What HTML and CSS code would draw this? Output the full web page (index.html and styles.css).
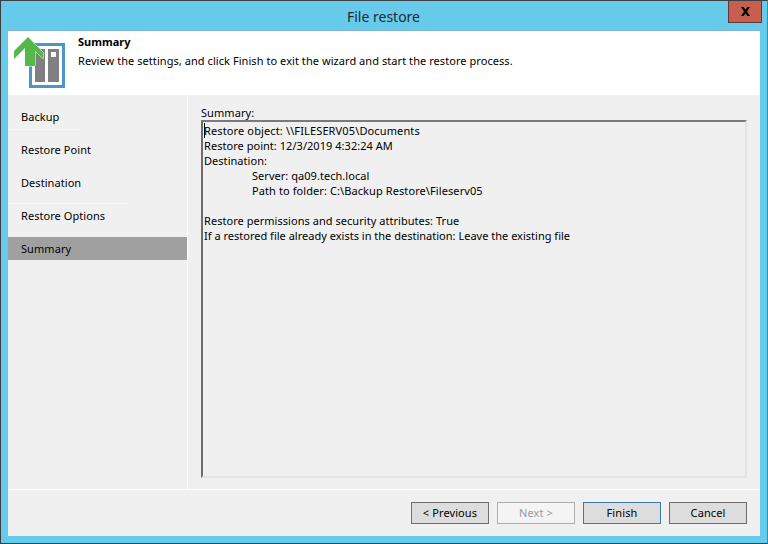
FILE: index.html
```html
<!DOCTYPE html>
<html lang="en">
<head>
<meta charset="utf-8">
<title>File restore</title>
<link rel="stylesheet" href="styles.css">
</head>
<body>
<div class="window">
  <div class="titlebar">
    <span class="title">File restore</span>
    <button class="close" aria-label="Close">
      <svg width="11" height="9" viewBox="0 0 11 9"><path d="M1 0h2.500l2 2.500 2-2.500h2.500L7 4.500 10 9H7.500l-2-2.500-2 2.500H1l3-4.500z" fill="#000"/></svg>
    </button>
  </div>
  <div class="client">
    <header class="head">
      <svg class="logo" width="70" height="64" viewBox="0 0 70 64">
        <rect x="22.500" y="13.500" width="33" height="42" fill="#fff" stroke="#4a97c7" stroke-width="3"/>
        <rect x="27" y="18" width="10" height="33" fill="#808080"/>
        <rect x="40" y="18" width="11" height="33" fill="#808080"/>
        <rect x="43" y="21" width="5" height="5" fill="#fff"/>
        <path d="M20 6 35 21V28L27 20V35H17V17L6 28V20z" fill="#54b948" stroke="#fff" stroke-width="1" paint-order="stroke"/>
      </svg>
      <div class="head-text">
        <div class="head-title">Summary</div>
        <div class="head-desc">Review the settings, and click Finish to exit the wizard and start the restore process.</div>
      </div>
    </header>
    <main class="body">
      <nav class="nav">
        <div class="step">Backup</div>
        <div class="step sep-short">Restore Point</div>
        <div class="step">Destination</div>
        <div class="step sep-long">Restore Options</div>
        <div class="step active">Summary</div>
      </nav>
      <section class="content">
        <label class="box-label">Summary:</label>
        <div class="box"><span class="caret"></span><div class="wide">Restore object: \\FILESERV05\Documents</div>
<div>Restore point: 12/3/2019 4:32:24 AM</div>
<div>Destination:</div>
<div class="indent">Server: qa09.tech.local</div>
<div class="indent wide-path">Path to folder: C:\Backup Restore\Fileserv05</div>
<div class="blank"></div>
<div>Restore permissions and security attributes: True</div>
<div class="tight">If a restored file already exists in the destination: Leave the existing file</div></div>
      </section>
    </main>
    <footer class="foot">
      <button class="btn">&lt; Previous</button>
      <button class="btn disabled">Next &gt;</button>
      <button class="btn default">Finish</button>
      <button class="btn">Cancel</button>
    </footer>
  </div>
</div>
</body>
</html>
```

FILE: styles.css
```css
* { box-sizing: border-box; }
html, body { margin: 0; padding: 0; }
body { width: 768px; height: 544px; overflow: hidden; font-family: "Noto Sans", "DejaVu Sans", sans-serif; font-size: 11px; letter-spacing: 0.06px; color: #000; }
.window { width: 768px; height: 544px; background: #66cbeb; border: 1px solid #3b3f42; border-right-color: #6e7a80; display: flex; flex-direction: column; padding: 0 7px 7px; }
.titlebar { height: 30px; flex: none; display: flex; align-items: center; justify-content: center; position: relative; }
.title { font-size: 14px; color: #1f2a30; letter-spacing: 0; margin-left: -1px; }
.close { position: absolute; right: -2px; top: 0; width: 34px; height: 22px; background: #c75e50; border: 1px solid #5c3a36; border-top: 0; padding: 0; display: flex; align-items: center; justify-content: center; }
.client { flex: 1; min-height: 0; background: #f0f0f0; display: flex; flex-direction: column; box-shadow: 0 -1px 0 #7fb5cc; }
.head { height: 64px; flex: none; background: #fff; display: flex; }
.logo { flex: none; }
.head-text { padding: 4px 0 0 0; }
.head-title { font-weight: 700; line-height: 14px; letter-spacing: 0; }
.head-desc { margin-top: 5px; line-height: 14px; }
.body { flex: 1; min-height: 0; display: flex; border-bottom: 1px solid #fff; }
.nav { flex: none; border-right: 1px solid #fff; display: flex; flex-direction: column; gap: 10px; padding-top: 10px; box-sizing: content-box; width: 179px; }
.step { height: 23px; line-height: 23px; padding-left: 13px; position: relative; }
.step.active { background: #a0a0a0; }
.sep-short::before, .sep-long::before { content: ""; position: absolute; left: 0; top: -1px; height: 1px; background: #f6f6f6; }
.sep-short::before { width: 72px; top: -9px; }
.sep-long::before { width: 120px; }
.content { flex: 1; min-width: 0; padding: 11px 13px 11px 13px; display: flex; flex-direction: column; }
.box-label { line-height: 14px; }
.box { flex: 1; position: relative; border: 2px solid #e3e3e3; border-top-color: #7a7a7a; border-left-color: #6e6e6e; padding: 1px 0 0 1px; line-height: 15px; letter-spacing: 0.04px; }
.wide { letter-spacing: 0.13px; }
.wide-path { letter-spacing: 0.09px; }
.tight { letter-spacing: 0.01px; }
.caret { position: absolute; left: 1px; top: 1px; width: 1px; height: 15px; background: #000; }
.indent { padding-left: 48px; }
.blank { height: 15px; }
.foot { height: 46px; flex: none; display: flex; justify-content: flex-end; gap: 8px; padding: 12px 13px 0 0; }
.btn { width: 78px; height: 22px; font: inherit; letter-spacing: 0.1px; background: #dddddd; border: 1px solid #707070; color: #000; padding: 0 0 2px; }
.btn.disabled { background: #f4f4f4; border-color: #adadad; color: #9a9a9a; }
.btn.default { border-color: #3d7aa8; }
```
